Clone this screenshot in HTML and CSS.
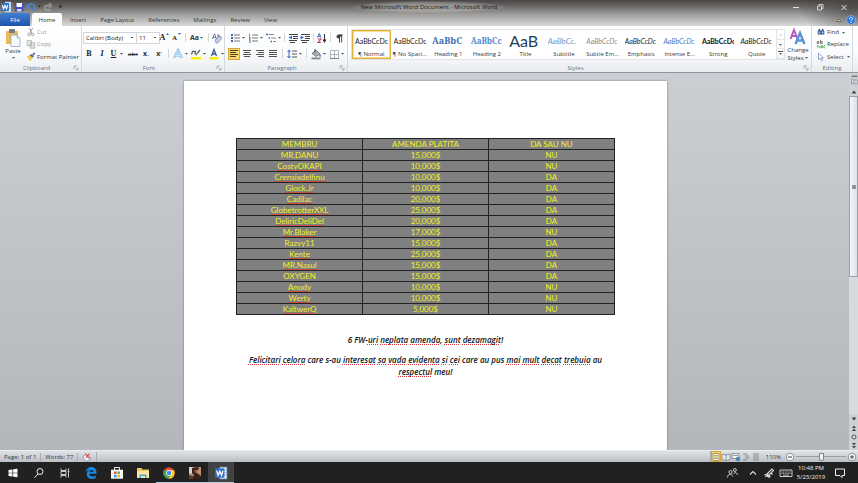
FILE: index.html
```html
<!DOCTYPE html>
<html lang="en">
<head>
<meta charset="utf-8">
<title>New Microsoft Word Document - Microsoft Word</title>
<link rel="stylesheet" href="styles.css">
</head>
<body>
<svg class="defs" aria-hidden="true">
  <symbol id="caret" viewBox="0 0 5 5"><path d="M1 2h3L2.500 3.800z" fill="#555"/></symbol>
  <symbol id="launch" viewBox="0 0 6 6"><path d="M1 4V1h3M5 3v2H3M2.500 2.500l2 2" fill="none" stroke="#99a1ac" stroke-width=".8"/></symbol>
  <symbol id="word" viewBox="0 0 12 12"><path d="M5 1h6v10H5z" fill="#f4f8fd" stroke="#7ba0d2" stroke-width=".6"/><path d="M9 3.500h1.500M9 5.500h1.500M9 7.500h1.500" stroke="#7ba0d2" stroke-width=".7"/><path d="M1 2h8v8H1z" fill="#2f6fc4"/><path d="M2.300 4l1.200 4L5 4.500 6.500 8l1.200-4" fill="none" stroke="#fff" stroke-width="1.100"/></symbol>
  <symbol id="lines" viewBox="0 0 12 12"><path d="M5 3h6M5 6h6M5 9h6" stroke="#777" stroke-width="1"/></symbol>
</svg>

<header class="top">
  <div class="titlebar">
    <div class="quick">
      <svg class="ico" viewBox="0 0 12 12"><use href="#word"/></svg>
      <span class="sep"></span>
      <button aria-label="Save"><svg class="ico" viewBox="0 0 12 12"><path d="M2 2h8.500v8.500H2z" fill="#4450b8"/><path d="M3.500 2h5.500v4H3.500z" fill="#f4f6ff"/><path d="M4 8h4.500v2.500H4z" fill="#cfd5ee"/></svg></button>
      <button aria-label="Undo"><svg class="ico" viewBox="0 0 12 12"><path d="M3 5c2-3 7-3 6.500 1.500C9.300 8.500 8 9 7 9" fill="none" stroke="#4b83d8" stroke-width="1.600"/><path d="M1.500 2.500v5h4.500z" fill="#4b83d8"/></svg></button>
      <svg class="car" viewBox="0 0 5 5"><path d="M1 1.500h3L2.500 3.500z" fill="#222"/></svg>
      <button aria-label="Redo"><svg class="ico" viewBox="0 0 12 12"><path d="M8 4.500H5C2 4.500 2 9 5 9h4M7 2l2.500 2.500L7 7" fill="none" stroke="#9a9a9a" stroke-width="1.300"/></svg></button>
      <button class="more" aria-label="Customize"><svg class="car" viewBox="0 0 5 5"><path d="M1 1h3M1 2.300h3L2.500 4z" fill="#222" stroke="#222" stroke-width=".4"/></svg></button>
    </div>
    <h1>New Microsoft Word Document - Microsoft Word</h1>
    <div class="winctl">
      <button aria-label="Minimize"><svg class="ico" viewBox="0 0 12 12"><path d="M3 6.500h6" stroke="#ddd"/></svg></button>
      <button aria-label="Restore"><svg class="ico" viewBox="0 0 12 12"><path d="M3.500 5h4v4h-4zM5 5V3.500h4v4H7.500" fill="none" stroke="#ddd" stroke-width=".9"/></svg></button>
      <button aria-label="Close"><svg class="ico" viewBox="0 0 12 12"><path d="M3.500 4l5 5M8.500 4l-5 5" stroke="#eee" stroke-width=".9"/></svg></button>
    </div>
  </div>
  <nav class="tabs">
    <button class="file">File</button><button class="active">Home</button><button>Insert</button><button>Page Layout</button><button>References</button><button>Mailings</button><button>Review</button><button>View</button>
    <span class="grow"></span>
    <button class="mini" aria-label="Collapse ribbon"><svg class="ico" viewBox="0 0 12 12"><path d="M4 7.500L6 5l2 2.500z" fill="#eee" stroke="#555" stroke-width=".8"/></svg></button>
    <button class="mini" aria-label="Help"><svg class="ico" viewBox="0 0 12 12"><circle cx="6" cy="6" r="4.400" fill="#3479d8" stroke="#8eb6ec" stroke-width=".7"/><path d="M4.500 5c0-2 3-2 3-.2C7.500 6 6 6 6 7.200M6 8v1" fill="none" stroke="#fff"/></svg></button>
  </nav>
</header>

<section class="ribbon">
  <div class="group clipboard">
    <div class="body">
      <button class="paste"><svg viewBox="0 0 16 18"><path d="M1 2h12v13H1z" fill="#e9b95b"/><path d="M4 0h6v4H4z" fill="#777d86"/><path d="M6 6h6l3 3v8.500H6z" fill="#f7faff" stroke="#8c9db5" stroke-width=".7"/><path d="M12 6v3h3" fill="#dce6f3" stroke="#8c9db5" stroke-width=".6"/></svg>Paste<svg class="car" viewBox="0 0 5 5"><use href="#caret"/></svg></button>
      <div class="stack">
        <button class="off"><svg class="ico" viewBox="0 0 12 12"><path d="M4 1l3 7M8 1L4.500 8" stroke="#9a9a9a" stroke-width="1.200"/><circle cx="3.500" cy="9" r="1.500" fill="none" stroke="#999"/><circle cx="8" cy="9" r="1.500" fill="none" stroke="#999"/></svg>Cut</button>
        <button class="off"><svg class="ico" viewBox="0 0 12 12"><path d="M1.500 2h5v6h-5zM5 4.500h5.500V11H5z" fill="#eee" stroke="#a5a5a5" stroke-width=".9"/><path d="M6.500 7h3M6.500 9h3" stroke="#bbb" stroke-width=".7"/></svg>Copy</button>
        <button><svg class="ico" viewBox="0 0 12 12"><path d="M1 5l4-1 3 3-3 4z" fill="#f0c84c"/><path d="M4 4l4 3 1.500-2-3-2.500z" fill="#6a6f78"/><path d="M8 4l2.500-3" stroke="#5361b0" stroke-width="1.800"/></svg>Format Painter</button>
      </div>
    </div>
    <div class="cap"><span>Clipboard</span><svg class="launch" viewBox="0 0 6 6"><use href="#launch"/></svg></div>
  </div>

  <div class="group font">
    <div class="body rows">
      <div class="row tight">
        <select class="face" aria-label="Font"><option>Calibri (Body)</option></select><select class="size" aria-label="Font size"><option>11</option></select>
        <button class="serif" aria-label="Grow font">A<svg class="car" viewBox="0 0 5 5"><path d="M1 3h3L2.500 1z" fill="#3b6bb5"/></svg></button>
        <button class="serif small" aria-label="Shrink font">A<svg class="car" viewBox="0 0 5 5"><path d="M1 1h3L2.500 3z" fill="#3b6bb5"/></svg></button>
        <span class="sep"></span>
        <button class="split bold" aria-label="Change case">Aa<svg class="car" viewBox="0 0 5 5"><use href="#caret"/></svg></button>
        <span class="sep"></span>
        <button aria-label="Clear formatting"><svg class="ico" viewBox="0 0 12 12"><path d="M1.500 7L3.500 2l2 5M2.200 5.500h2.600M7 2v5h2V4H7" fill="none" stroke="#5b6b94" stroke-width=".9"/><path d="M4 8l5-4 2 2-4 5H5z" fill="#c4cdee" stroke="#6677a8" stroke-width=".6"/></svg></button>
      </div>
      <div class="row">
        <button class="serif">B</button><button class="serif ital">I</button><button class="split serif und"><u>U</u><svg class="car" viewBox="0 0 5 5"><use href="#caret"/></svg></button><button class="strike">abc</button><button class="bold">x<sub>,</sub></button><button class="bold">x<sup>'</sup></button>
        <span class="sep"></span>
        <button class="split" aria-label="Text effects"><svg class="ico" viewBox="0 0 12 12"><path d="M2 10L6 2l4 8M4 7.500h4" fill="none" stroke="#79b5e6" stroke-width="2.200"/><path d="M2 10L6 2l4 8M4 7.500h4" fill="none" stroke="#eef8ff" stroke-width=".8"/></svg><svg class="car" viewBox="0 0 5 5"><use href="#caret"/></svg></button>
        <button class="split" aria-label="Highlight"><svg class="ico" viewBox="0 0 12 12"><path d="M1 9h10v2.500H1z" fill="#f7f000"/><path d="M1.500 6.500l1-3h3l-.5 3M6 7l4-5" fill="none" stroke="#566" stroke-width="1.300"/><path d="M5 8l2-3 1.500 1z" fill="#d9b43b"/></svg><svg class="car" viewBox="0 0 5 5"><use href="#caret"/></svg></button>
        <button class="split" aria-label="Font color"><svg class="ico" viewBox="0 0 12 12"><path d="M1.500 9h9v2.500h-9z" fill="#f7f000"/><path d="M3.500 8L6 1.500 8.500 8M4.500 6h3" fill="none" stroke="#3c5c9c" stroke-width="1.300"/></svg><svg class="car" viewBox="0 0 5 5"><use href="#caret"/></svg></button>
      </div>
    </div>
    <div class="cap"><span>Font</span><svg class="launch" viewBox="0 0 6 6"><use href="#launch"/></svg></div>
  </div>

  <div class="group para">
    <div class="body rows">
      <div class="row tight">
        <button class="split" aria-label="Bullets"><svg class="ico" viewBox="0 0 12 12"><use href="#lines"/><path d="M2 2h2v2H2zM2 5h2v2H2zM2 8h2v2H2z" fill="#3e68b4"/></svg><svg class="car" viewBox="0 0 5 5"><use href="#caret"/></svg></button>
        <button class="split" aria-label="Numbering"><svg class="ico" viewBox="0 0 12 12"><use href="#lines"/><path d="M2.500 1.500v3M2 5.500h1.200v1L2 7.300h1.500M2 8.500h1.200v2H2" fill="none" stroke="#3e68b4" stroke-width=".8"/></svg><svg class="car" viewBox="0 0 5 5"><use href="#caret"/></svg></button>
        <button class="split" aria-label="Multilevel list"><svg class="ico" viewBox="0 0 12 12"><path d="M4 2.500h5M6 6h5M8 9.500h3" stroke="#888"/><path d="M1 2.500h2M3.500 6h1.500M5.500 9.500h1.500" stroke="#3e68b4" stroke-width="1.700"/></svg><svg class="car" viewBox="0 0 5 5"><use href="#caret"/></svg></button>
        <span class="sep"></span>
        <button aria-label="Decrease indent"><svg class="ico" viewBox="0 0 12 12"><path d="M2 2.500h9M6 4.500h5M6 6.500h5M2 8.500h8M3 10.500h5" stroke="#444"/><path d="M5 3.500v4L1.500 5.500z" fill="#3b6bd0"/></svg></button>
        <button aria-label="Increase indent"><svg class="ico" viewBox="0 0 12 12"><path d="M2 2.500h9M6 4.500h5M6 6.500h5M2 8.500h8M3 10.500h5" stroke="#444"/><path d="M1.500 3.500v4L5 5.500z" fill="#3b6bd0"/></svg></button>
        <span class="sep"></span>
        <button aria-label="Sort"><svg class="ico" viewBox="0 0 12 12"><path d="M1.500 5.500L3.300 1.500 5 5.500M2.200 4.400h2" fill="none" stroke="#3b5fc0" stroke-width="1"/><path d="M2 7h3l-3 3.500h3" fill="none" stroke="#b3405c" stroke-width="1.100"/><path d="M8.500 2v7M7 7.500L8.500 10 10 7.500" fill="none" stroke="#333" stroke-width="1.100"/></svg></button>
        <span class="sep"></span>
        <button aria-label="Show marks"><svg class="ico" viewBox="0 0 12 12"><path d="M10 2.500H5.500a2 2 0 000 4H6z" fill="#444"/><path d="M6.500 2.500v8M8.700 2.500v8" stroke="#444"/></svg></button>
      </div>
      <div class="row">
        <button class="on" aria-label="Align left"><svg class="ico" viewBox="0 0 12 12"><path d="M2 2.500h8M2 4.500h6M2 6.500h8M2 8.500h6" stroke="#4b4420"/></svg></button>
        <button aria-label="Center"><svg class="ico" viewBox="0 0 12 12"><path d="M2 2.500h8M3 4.500h6M2 6.500h8M3 8.500h6" stroke="#555"/></svg></button>
        <button aria-label="Align right"><svg class="ico" viewBox="0 0 12 12"><path d="M2 2.500h8M4 4.500h6M2 6.500h8M4 8.500h6" stroke="#555"/></svg></button>
        <button aria-label="Justify"><svg class="ico" viewBox="0 0 12 12"><path d="M2 2.500h8M2 4.500h8M2 6.500h8M2 8.500h8" stroke="#555"/></svg></button>
        <span class="sep"></span>
        <button class="split" aria-label="Line spacing"><svg class="ico" viewBox="0 0 12 12"><path d="M6 3h5M6 6h5M6 9h5" stroke="#555" stroke-width="1.200"/><path d="M3 3v6M1.500 4L3 2l1.500 2M1.500 8L3 10l1.500-2" fill="none" stroke="#3b6bc0"/></svg><svg class="car" viewBox="0 0 5 5"><use href="#caret"/></svg></button>
        <span class="sep"></span>
        <button class="split" aria-label="Shading"><svg class="ico" viewBox="0 0 12 12"><path d="M1.500 9.500h9v1.800h-9z" fill="#888"/><path d="M2 5.500l4-3.500 4 4-4 2.500z" fill="#a9b2bd" stroke="#555c66" stroke-width=".7"/><path d="M5 1v4" stroke="#555"/><path d="M10 5.500l1.200 3H9z" fill="#3b6bc0"/></svg><svg class="car" viewBox="0 0 5 5"><use href="#caret"/></svg></button>
        <button class="split" aria-label="Borders"><svg class="ico" viewBox="0 0 12 12"><path d="M2.500 2.500h8v8h-8zM6.500 2.500v8M2.500 6.500h8" fill="none" stroke="#a3a8ae" stroke-width=".8"/><path d="M2 10.500h9" stroke="#777" stroke-width=".8"/></svg><svg class="car" viewBox="0 0 5 5"><use href="#caret"/></svg></button>
      </div>
    </div>
    <div class="cap"><span>Paragraph</span><svg class="launch" viewBox="0 0 6 6"><use href="#launch"/></svg></div>
  </div>

  <div class="group styles">
    <div class="body">
      <div class="gallery">
        <button class="on"><b class="pv">AaBbCcDc</b><span>¶ Normal</span></button>
        <button><b class="pv">AaBbCcDc</b><span>¶ No Spaci...</span></button>
        <button><b class="pv h1">AaBbC</b><span>Heading 1</span></button>
        <button><b class="pv h2">AaBbCc</b><span>Heading 2</span></button>
        <button><b class="pv title">AaB</b><span>Title</span></button>
        <button><b class="pv sub">AaBbCc.</b><span>Subtitle</span></button>
        <button><b class="pv it grey">AaBbCcDc</b><span>Subtle Em...</span></button>
        <button><b class="pv it">AaBbCcDc</b><span>Emphasis</span></button>
        <button><b class="pv it blue">AaBbCcDc</b><span>Intense E...</span></button>
        <button><b class="pv strong">AaBbCcDc</b><span>Strong</span></button>
        <button><b class="pv it">AaBbCcDc</b><span>Quote</span></button>
      </div>
      <div class="gscroll">
        <button aria-label="Scroll up"><svg class="car" viewBox="0 0 5 5"><path d="M1 3.500h3L2.500 2z" fill="#bbb"/></svg></button>
        <button aria-label="Scroll down"><svg class="car" viewBox="0 0 5 5"><use href="#caret"/></svg></button>
        <button aria-label="More styles"><svg class="car" viewBox="0 0 5 5"><path d="M0 .5h5" stroke="#555"/><use href="#caret"/></svg></button>
      </div>
      <button class="change"><svg viewBox="0 0 18 18"><path d="M1.500 11L5 2l3.500 9M3 8h4" fill="none" stroke="#b45cc0" stroke-width="2"/><path d="M6.500 16L11 5l4.500 11M8.500 12.500h5" fill="none" stroke="#5a93d8" stroke-width="2.400"/></svg><span>Change</span><span>Styles<svg class="car" viewBox="0 0 5 5"><use href="#caret"/></svg></span></button>
    </div>
    <div class="cap"><span>Styles</span><svg class="launch" viewBox="0 0 6 6"><use href="#launch"/></svg></div>
  </div>

  <div class="group editing">
    <div class="body">
      <div class="stack">
        <button><svg class="ico" viewBox="0 0 12 12"><path d="M2 5l1.500-3h1L6 5v4H2zM6 5l1.500-3h1L10 5v4H6z" fill="#3e5f9e"/><path d="M3 5.500h2v2H3zM7 5.500h2v2H7z" fill="#a8c2ea"/></svg>Find<svg class="car" viewBox="0 0 5 5"><use href="#caret"/></svg></button>
        <button><svg class="ico" viewBox="0 0 12 12"><path d="M1.500 3h2v2.500h-2zM5.500 1v4.500h2V3h-2" fill="none" stroke="#555" stroke-width=".9"/><path d="M1.500 7v2.500H5M4 8l1.500 1.500L4 11" fill="none" stroke="#4a9a46" stroke-width=".9"/><path d="M6.500 8h1.500v2.500H6.500zM11 8H9.500v2.500H11" fill="none" stroke="#4a9a46" stroke-width=".9"/></svg>Replace</button>
        <button><svg class="ico" viewBox="0 0 12 12"><path d="M3 1.500v7.500l2-1.700L6.500 10.500l1.300-.7L6.500 7H9z" fill="#fff" stroke="#5c7fb6" stroke-width=".8"/></svg>Select<svg class="car" viewBox="0 0 5 5"><use href="#caret"/></svg></button>
      </div>
    </div>
    <div class="cap"><span>Editing</span></div>
  </div>
</section>

<main class="work">
  <div class="canvas">
    <article class="page">
      <table>
        <tr><td>MEMBRU</td><td>AMENDA PLATITA</td><td>DA SAU NU</td></tr>
        <tr><td>MR.DANU</td><td>15,000$</td><td>NU</td></tr>
        <tr><td><i>CostyOKAPI</i></td><td>10,000$</td><td>NU</td></tr>
        <tr><td><i>Crensixdelfinu</i></td><td>10,000$</td><td>DA</td></tr>
        <tr><td><i>Glock.Jr</i></td><td>10,000$</td><td>DA</td></tr>
        <tr><td><i>Cadilac</i></td><td>20,000$</td><td>DA</td></tr>
        <tr><td><i>GlobetrotterXXL</i></td><td>25,000$</td><td>DA</td></tr>
        <tr><td><i>DeliricDeliDel</i></td><td>20,000$</td><td>DA</td></tr>
        <tr><td><i>Mr.Blaker</i></td><td>17,000$</td><td>NU</td></tr>
        <tr><td>Razvy11</td><td>15,000$</td><td>DA</td></tr>
        <tr><td><i>Kente</i></td><td>25,000$</td><td>DA</td></tr>
        <tr><td><i>MR.Nasul</i></td><td>15,000$</td><td>DA</td></tr>
        <tr><td>OXYGEN</td><td>15,000$</td><td>DA</td></tr>
        <tr><td><i>Anody</i></td><td>10,000$</td><td>NU</td></tr>
        <tr><td><i>Werty</i></td><td>10,000$</td><td>NU</td></tr>
        <tr><td><i>KaltwerQ</i></td><td>5,000$</td><td>NU</td></tr>
      </table>
      <p>6 FW-<i>uri</i> <i>neplata</i> <i>amenda</i>, <i>sunt</i> <i>dezamagit</i>!</p>
      <p><i>Felicitari</i> <i>celora</i> care s-au <i>interesat</i> <i>sa</i> <i>vada</i> <i>evidenta</i> <i>si</i> <i>cei</i> care au pus <i>mai</i> <i>mult</i> <i>decat</i> <i>trebuia</i> au<br><i>respectul</i> meu!</p>
    </article>
  </div>
  <aside class="vscroll">
    <button aria-label="Split"><svg class="ico" viewBox="0 0 12 12"><path d="M3 1.500h7" stroke="#555" stroke-width="1.300"/><path d="M3 5h3l1 1h3v4.500H3z" fill="#e5e8ec" stroke="#7a8089" stroke-width=".8"/><circle cx="6" cy="8" r="1.500" fill="none" stroke="#7a8089" stroke-width=".7"/></svg></button>
    <button aria-label="Scroll up"><svg class="arrow" viewBox="0 0 8 8"><path d="M1.500 5.500h5L4 2.500z" fill="#444"/></svg></button>
    <div class="track"><div class="thumb"></div></div>
    <button aria-label="Scroll down"><svg class="arrow" viewBox="0 0 8 8"><path d="M1.500 2.500h5L4 5.500z" fill="#444"/></svg></button>
    <button aria-label="Previous page"><svg class="arrow" viewBox="0 0 8 8"><path d="M2 4l2-2.500L6 4zM2 7l2-2.500L6 7z" fill="#444"/></svg></button>
    <button aria-label="Browse object"><svg class="arrow" viewBox="0 0 8 8"><circle cx="4" cy="4" r="2" fill="#ddd" stroke="#555"/></svg></button>
    <button aria-label="Next page"><svg class="arrow" viewBox="0 0 8 8"><path d="M2 1l2 2.500L6 1zM2 4l2 2.500L6 4z" fill="#444"/></svg></button>
  </aside>
</main>

<footer class="status">
  <span class="cell">Page: 1 of 1</span><span class="cell">Words: 77</span>
  <span class="cell"><svg class="ico" viewBox="0 0 12 12"><path d="M1 5l4-2 5 3-1 4-5 1z" fill="#f2f5fc" stroke="#6d86bd" stroke-width=".8"/><path d="M4 2l5 6M9 2L5 7" stroke="#d9503c" stroke-width="1.300"/></svg></span>
  <span class="grow"></span>
  <div class="views">
    <button class="on" aria-label="Print layout"><svg class="ico" viewBox="0 0 12 12"><path d="M3 2.500h6v7H3z" fill="#fff4cf" stroke="#8b8360" stroke-width=".8"/><path d="M4 4.500h4M4 6h4M4 7.500h4" stroke="#8b8360" stroke-width=".7"/></svg></button>
    <button aria-label="Reading view"><svg class="ico" viewBox="0 0 12 12"><path d="M2 3l4 1 4-1v5.500l-4 1-4-1zM6 4v5" fill="#e8eaee" stroke="#7c828b" stroke-width=".8"/></svg></button>
    <button aria-label="Web layout"><svg class="ico" viewBox="0 0 12 12"><path d="M2 2.500h7v5H2zM3 4.500h5" fill="#edf0f4" stroke="#7c828b" stroke-width=".8"/><circle cx="8" cy="8" r="2.200" fill="#4a86b0"/></svg></button>
    <button aria-label="Outline"><svg class="ico" viewBox="0 0 12 12"><path d="M3 3h4M5 5h4M5 7h4M3 9h4" stroke="#888e96"/></svg></button>
    <button aria-label="Draft"><svg class="ico" viewBox="0 0 12 12"><path d="M3 3h6M3 5h6M3 7h6M3 9h6" stroke="#888e96"/></svg></button>
  </div>
  <button class="pct">110%</button>
  <button aria-label="Zoom out"><svg class="ico" viewBox="0 0 12 12"><circle cx="6" cy="6" r="3.800" fill="#f6f7f9" stroke="#777d85" stroke-width=".8"/><path d="M4 6h4" stroke="#444"/></svg></button>
  <input class="zoom" type="range" min="0" max="100" value="50" aria-label="Zoom">
  <button aria-label="Zoom in"><svg class="ico" viewBox="0 0 12 12"><circle cx="6" cy="6" r="3.800" fill="#f6f7f9" stroke="#777d85" stroke-width=".8"/><path d="M4 6h4M6 4v4" stroke="#444"/></svg></button>
</footer>

<footer class="taskbar">
  <button aria-label="Start"><svg viewBox="0 0 14 14"><path d="M2.500 4l4-.6V6.700h-4zM7.200 3.300L11.500 2.700v4H7.200zM2.500 7.300h4v3.300l-4-.6zM7.200 7.300h4.300v4l-4.300-.6z" fill="#fff"/></svg></button>
  <button aria-label="Search"><svg viewBox="0 0 14 14"><circle cx="8" cy="5.500" r="3" fill="none" stroke="#eee"/><path d="M6 8l-3.500 3.700" stroke="#eee"/></svg></button>
  <button aria-label="Task view"><svg viewBox="0 0 14 14"><path d="M3 2.500v2h5v-2M3 11.500v-2h5v2M3 5.500h5v3H3zM10.500 2.500v9M9.700 5.500h1.600" fill="none" stroke="#ddd" stroke-width=".9"/></svg></button>
  <button aria-label="Edge"><svg viewBox="0 0 14 14"><path d="M1.500 6.500C2.300 2.500 5 1 7.500 1c3.200 0 5 2.400 5 5.300v1.500H5.300c.2 3 4.200 3.200 6.500 1.600v2.700C7.500 14.200 2.800 12.400 2.700 8.500c0-2.200 1.300-3.700 2.800-4.500-1.700.3-3 1.200-4 2.500zM5.500 5.800h4C9.400 3.300 6 3.300 5.500 5.800z" fill="#1587e0" fill-rule="evenodd"/></svg></button>
  <button aria-label="Store"><svg viewBox="0 0 14 14"><path d="M4.500 4V1.500h5V4" fill="none" stroke="#eee"/><path d="M1 3.700h12v9H1z" fill="#f5f5f5"/><path d="M4 5.500h2.600V8H4z" fill="#e85a35"/><path d="M7.400 5.500H10V8H7.400z" fill="#72b23c"/><path d="M4 8.800h2.600v2.500H4z" fill="#35a0e2"/><path d="M7.400 8.800H10v2.500H7.400z" fill="#f1b92e"/></svg></button>
  <button aria-label="File Explorer"><svg viewBox="0 0 14 14"><path d="M1 2h4.500l1 1.500H13V12H1z" fill="#f1c75b"/><path d="M1 5h12v7H1z" fill="#fbe49b"/><path d="M3.500 12V8.500h7V12H9V10H5v2z" fill="#45a7dc"/></svg></button>
  <button class="run" aria-label="Chrome"><svg viewBox="0 0 14 14"><circle cx="7" cy="7" r="5.800" fill="#e44b3c"/><path d="M2 4.100A5.800 5.800 0 006.300 12.800L9.500 8.400 7 7z" fill="#39a453"/><path d="M12.100 4.300A5.800 5.800 0 016.300 12.800L9.500 8.400 9 4.300z" fill="#f6cb2e"/><circle cx="7" cy="7" r="2.900" fill="#fff"/><circle cx="7" cy="7" r="2.200" fill="#4285f4"/></svg></button>
  <button class="run" aria-label="Game"><svg viewBox="0 0 14 14"><path d="M1 1h12v12H1z" fill="#b98f77"/><path d="M1 1h4v5l-2 2-2-1z" fill="#e0cfc2"/><path d="M4 2l6-1 1 2-2 1v3l4 3v3H4l2-4-2-2z" fill="#3b211c"/><path d="M6 4h3v3H7z" fill="#94573f"/><path d="M1 9l4 1v3H1z" fill="#613528"/></svg></button>
  <button class="run cur" aria-label="Word"><svg viewBox="0 0 12 12"><use href="#word"/></svg></button>
  <span class="grow"></span>
  <button aria-label="People"><svg viewBox="0 0 14 14"><circle cx="5.500" cy="6" r="1.600" fill="none" stroke="#ddd" stroke-width=".9"/><path d="M2.500 11.500c0-4 5-4 5.500-1M9 8c0-2 3-2 3.500 1" fill="none" stroke="#ddd" stroke-width=".9"/><circle cx="9.800" cy="4" r="1.500" fill="none" stroke="#ddd" stroke-width=".9"/></svg></button>
  <button class="narrow" aria-label="Hidden icons"><svg viewBox="0 0 14 14"><path d="M4 8.500l3-3 3 3" fill="none" stroke="#ddd" stroke-width="1.100"/></svg></button>
  <button class="narrow" aria-label="Pen"><svg viewBox="0 0 14 14"><path d="M5 8l5-5 1.500 1.500-5 5zM2.500 9c2-2 3 3 5 2s-3-3-4 0M9 8h2" fill="none" stroke="#ddd" stroke-width="1.100"/></svg></button>
  <button class="mid" aria-label="Keyboard"><svg viewBox="0 0 14 14"><path d="M1 4h12v6.500H1z" fill="none" stroke="#ddd" stroke-width=".9"/><path d="M2.500 6h9M2.500 7.500h9" stroke="#ddd" stroke-width=".8" stroke-dasharray="1 .6"/><path d="M4 9.200h6" stroke="#ddd" stroke-width=".8"/></svg></button>
  <div class="clock"><span>10:48 PM</span><span>5/23/2019</span></div>
  <button aria-label="Notifications"><svg viewBox="0 0 14 14"><path d="M2.500 3h9v6.500H9v2L7 9.500H2.500z" fill="none" stroke="#eee"/></svg></button>
</footer>
</body>
</html>
```

FILE: styles.css
```css
* { box-sizing: border-box; }
html, body { height: 100%; margin: 0; }
body {
  display: flex;
  flex-direction: column;
  overflow: hidden;
  font: 6px/8px "Open Sans", "Noto Sans", sans-serif;
  color: #34383e;
  background: #c3c6ca;
}
button {
  display: flex;
  align-items: center;
  justify-content: center;
  flex: none;
  margin: 0;
  padding: 0;
  border: 0;
  background: none;
  color: inherit;
  font: inherit;
  white-space: nowrap;
}
svg { display: block; flex: none; }
.defs { position: absolute; width: 0; height: 0; }
.ico { width: 12px; height: 12px; }
.car { width: 5px; height: 5px; }
.grow { flex: 1; }
.sep { flex: none; width: 1px; height: 9px; margin: 0 2px; background: #d3d7dc; }

/* Title bar and tabs */
.top {
  flex: none;
  background:
    radial-gradient(ellipse 60px 34px at 100% 20%, rgba(70, 68, 66, .8), transparent),
    linear-gradient(#494745 0, #625f5d 20%, #a3a2a1 58%, #d8d9da 100%);
}
.titlebar { display: grid; grid-template-columns: 1fr auto 1fr; align-items: center; height: 13px; }
.titlebar h1 {
  margin: 0;
  padding: 0 8px;
  color: #111;
  font-size: 6px;
  font-weight: 400;
  line-height: 12px;
  background: radial-gradient(ellipse at center, rgba(200, 200, 200, .6), rgba(200, 200, 200, .4) 50%, transparent 75%);
}
.quick { display: flex; align-items: center; }
.quick .sep { margin: 0; background: #777; }
.quick .more { margin-left: 4px; }
.winctl { display: flex; justify-content: flex-end; gap: 12px; padding-right: 8px; }
.tabs { display: flex; height: 13px; padding-right: 1px; color: #333; }
.tabs button { padding: 0 7px; }
.tabs .file { width: 30px; margin-right: 2px; color: #fff; background: linear-gradient(#3f7ed2, #1c54ad); border-radius: 2px 2px 0 0; }
.tabs .active { width: 30px; margin-right: 1px; background: #fcfcfd; border-radius: 2px 2px 0 0; }
.tabs .mini { padding: 0; }

/* Ribbon */
.ribbon {
  display: flex;
  flex: none;
  height: 47px;
  padding-right: 5px;
  background: linear-gradient(#fff 0, #fbfcfd 55%, #e9ecf0 100%);
  border-bottom: 1px solid #8f959d;
}
.group { display: flex; flex-direction: column; flex: none; border-right: 1px solid #d5d9de; }
.group .body { display: flex; flex: 1; min-height: 0; }
.cap { display: flex; align-items: center; height: 9px; color: #6a727e; }
.cap span { flex: 1; text-align: center; }
.launch { width: 6px; height: 6px; margin-right: 2px; }
.clipboard { width: 82px; }
.font { width: 143px; }
.para { width: 123px; }
.styles { flex: 1; min-width: 0; }
.editing { width: 41px; }
.paste { flex-direction: column; width: 26px; }
.paste > svg:first-child { width: 16px; height: 18px; }
.stack { display: flex; flex-direction: column; justify-content: space-around; align-items: flex-start; }
.stack button { gap: 1px; }
.stack .ico { width: 10px; height: 10px; }
.stack .car { margin-left: 1px; }
.off { color: #999; }
.rows { flex-direction: column; gap: 3px; padding: 5px 1px 0; }
.row { display: flex; align-items: center; gap: 1px; height: 13px; }
.row.tight { gap: 0; }
.para .rows { padding-left: 3px; }
.row button { width: 12px; height: 12px; }
.row .split { width: 17px; }
.row.tight .split { width: 18px; }
.row select {
  flex: none;
  height: 12px;
  margin: 0 -1px 0 0;
  padding: 0 2px;
  border: 1px solid #d2d6db;
  border-radius: 0;
  appearance: none;
  color: #222;
  font: inherit;
  background: linear-gradient(#555, #555) right 3px center / 2px 1px no-repeat #fff;
}
.row .face { width: 54px; }
.row .size { width: 24px; }
.serif { font: bold 8px "Liberation Serif", serif; color: #222; }
.serif.small { font-size: 7px; }
.serif .car { align-self: flex-start; }
.serif.und .car { align-self: center; margin-left: 3px; }
.serif.ital { font-style: italic; }
.bold { font-weight: 700; color: #333; }
.row .bold { font-size: 7px; }
.strike { text-decoration: line-through; color: #333; }
.bold sub, .bold sup { color: #3b6bb5; font-size: 6px; line-height: 6px; }
.row .on, .views .on { background: #fbd66f; box-shadow: inset 0 0 0 1px #d9a634; }

.styles .body { padding: 3px 0 3px 3px; }
.gallery { display: flex; flex: 1; min-width: 0; border: 1px solid #dfe3e7; border-right: 0; background: #fff; }
.gallery button { flex: 1 1 0; flex-direction: column; min-width: 0; padding: 0 3px; overflow: hidden; }
.gallery .on { background: #fff; box-shadow: inset 0 0 0 1px #e0ae3d, inset 0 0 0 2px #fbe08a; }
.pv {
  display: flex;
  align-items: center;
  width: 100%;
  height: 18px;
  overflow: hidden;
  color: #222;
  font: 400 7px/18px Lato, sans-serif;
}
.pv.h1, .pv.h2 { color: #3f6fae; font: 700 9px/18px "Noto Serif", "DejaVu Serif", "Liberation Serif", serif; }
.pv.h2 { color: #5389cd; font-size: 8px; }
.pv.title { color: #22405f; font-size: 16px; }
.pv.sub { color: #6b9ad6; font-style: italic; font-size: 8px; }
.pv.it { font-style: italic; }
.pv.grey { color: #8b8b8b; }
.pv.blue { color: #4580cb; }
.pv.strong { color: #111; font-weight: 700; }
.gscroll { display: flex; flex-direction: column; width: 9px; border: 1px solid #dfe3e7; }
.gscroll button { flex: 1; border-bottom: 1px solid #e3e6ea; }
.change { flex-direction: column; width: 26px; }
.change > svg { width: 18px; height: 18px; }
.change span { display: flex; align-items: center; }
.editing .stack { padding-left: 4px; }

/* Document area */
.work { display: flex; flex: 1; min-height: 0; }
.canvas { flex: 1; padding: 8px 0 0 2px; background: linear-gradient(#cbced2, #b3b6ba); }
.page {
  width: 57%;
  height: 100%;
  margin: 0 auto;
  padding: 57px 52px 0;
  background: #fff;
  box-shadow: 0 0 2px #6d7175;
  font: 8px/12px Lato, sans-serif;
  color: #111;
}
table { width: 100%; border-collapse: separate; border-spacing: 0; table-layout: fixed; background: #808080; color: #f1f01c; border: solid #222; border-width: 1px 0 0 1px; }
td { height: 11px; padding: 0; border: solid #222; border-width: 0 1px 1px 0; text-align: center; line-height: 10px; }
.page i { font-style: inherit; text-decoration: underline dotted #e8343c 1px; text-underline-offset: 1px; text-decoration-skip-ink: none; }
.page td i { display: inline-block; height: 10px; vertical-align: top; text-decoration: none; box-shadow: inset 0 -1px #c8503c; }
.page p { margin: 0; font-family: "Open Sans", sans-serif; font-weight: 600; font-style: italic; text-align: center; }
.page table + p { margin: 19px 0 8px; }
.vscroll { display: flex; flex-direction: column; align-items: center; width: 9px; background: #cdd0d5; }
.vscroll button { width: 9px; height: 9px; }
.vscroll button:first-child { height: 14px; }
.vscroll .arrow { width: 8px; height: 8px; }
.vscroll .ico { width: 10px; }
.track { flex: 1; width: 9px; background: #d7dade; }
.thumb {
  height: 57%;
  border: 1px solid #9aa0a8;
  background: linear-gradient(#8f959d, #8f959d) center / 4px 4px no-repeat, linear-gradient(90deg, #f3f5f8, #dde1e6);
}

/* Status bar */
.status {
  display: flex;
  align-items: center;
  flex: none;
  height: 12px;
  background: linear-gradient(#dfe2e6, #bcc0c6);
  border-top: 1px solid #e9ebee;
}
.cell { padding: 0 4px; border-right: 1px solid #a9adb3; }
.cell .ico { width: 10px; height: 10px; }
.views { display: flex; border-left: 1px solid #a9adb3; }
.views button { width: 10px; height: 11px; }
.pct { padding: 0 3px 0 5px; }
.zoom { appearance: none; width: 50px; height: 9px; margin: 0; background: linear-gradient(#9a9fa6, #9a9fa6) center / 100% 1px no-repeat; }
.zoom::-webkit-slider-thumb { appearance: none; width: 5px; height: 8px; border: 1px solid #7d838b; border-radius: 1px 1px 3px 3px; background: #f4f5f7; }

/* Taskbar */
.taskbar { display: flex; flex: none; height: 21px; padding-right: 5px; background: #212121; color: #eee; }
.taskbar button { width: 26px; }
.taskbar svg { width: 14px; height: 14px; }
.taskbar .run { box-shadow: inset 0 -1px #b9cbd8, inset 2px 0 #212121, inset -2px 0 #212121; }
.taskbar .cur { background: #424242; box-shadow: inset 0 -1px #b9cbd8; }
.taskbar .narrow { width: 16px; }
.taskbar .mid { width: 18px; }
.clock { display: flex; flex-direction: column; justify-content: center; align-items: center; width: 32px; line-height: 9px; }
```
